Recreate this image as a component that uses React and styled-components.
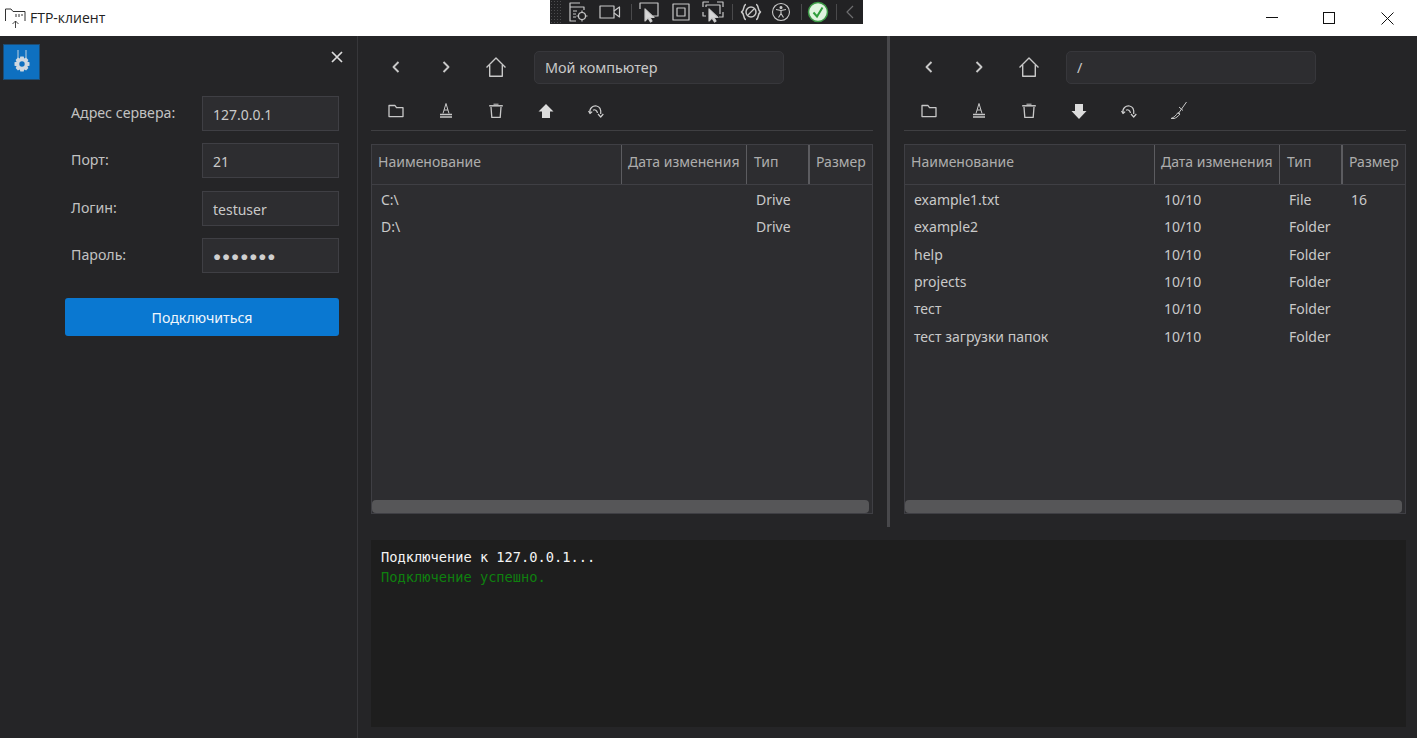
import React from 'react'
import styled, { createGlobalStyle } from 'styled-components'

const Global = createGlobalStyle`
  html, body { margin: 0; padding: 0; height: 100%; background: #252527; overflow: hidden; }
  * { box-sizing: border-box; }
`

const Window = styled.div`
  position: relative;
  width: 1417px;
  height: 738px;
  display: flex;
  flex-direction: column;
  font-family: 'Noto Sans', 'Open Sans', sans-serif;
  font-size: 14px;
  color: #c9c9c9;
`

const TitleBar = styled.header`
  height: 36px;
  flex: none;
  background: #fff;
  display: flex;
  align-items: center;
  padding-left: 4px;
  color: #222;
  font-family: 'Open Sans', sans-serif;
  font-size: 14px;
`

const TitleText = styled.span`
  margin-left: 4px;
  margin-top: -1px;
`

const WinButtons = styled.div`
  margin-left: auto;
  display: flex;
  align-items: center;
  margin-right: 23px;
  gap: 45px;
  svg { display: block; }
  svg:last-child { margin-left: 1px; }
`

const DevBar = styled.div`
  position: absolute;
  left: 550px;
  top: 0;
  width: 313px;
  height: 24px;
  background: #222224;
  display: flex;
  align-items: center;
`

const Gripper = styled.span`
  width: 16px;
  height: 24px;
  flex: none;
  background-image: radial-gradient(#4c4c4e 0.7px, transparent 0.8px);
  background-size: 3px 3px;
  background-position: 3px 0;
  background-clip: content-box;
  padding-right: 5px;
`

const DevSlot = styled.span`
  width: ${p => p.$w}px;
  height: 24px;
  flex: none;
  display: flex;
  align-items: center;
  justify-content: center;
`

const DevSep = styled.span`
  width: 1px;
  height: 16px;
  background: #4a4a4c;
  flex: none;
  margin-left: ${p => p.$ml || 0}px;
`

const Body = styled.div`
  flex: 1;
  display: flex;
  min-height: 0;
`

const Sidebar = styled.aside`
  position: relative;
  width: 358px;
  flex: none;
  border-right: 1px solid #37373a;
  padding: 8px 18px 0 3px;
`

const GearButton = styled.button`
  width: 37px;
  height: 36px;
  padding: 0;
  background: #0e70c0;
  border: 1px solid #1c4c74;
  display: flex;
  align-items: center;
  justify-content: center;
`

const CloseButton = styled.button`
  position: absolute;
  top: 14px;
  right: 13px;
  width: 14px;
  height: 14px;
  padding: 0;
  background: none;
  border: 0;
  display: flex;
  svg { display: block; }
`

const Form = styled.div`
  margin-top: 16px;
  margin-left: 62px;
  display: flex;
  flex-direction: column;
`

const FormRow = styled.label`
  display: flex;
  align-items: center;
  height: 35px;
  margin-bottom: 12.3px;
  padding-left: 6px;
`

const FormLabel = styled.span`
  width: 131px;
  flex: none;
  margin-top: -2px;
  font-size: 14.2px;
  color: #c2c2c2;
`

const Field = styled.div`
  width: 137px;
  height: 35px;
  background: #2d2d30;
  border: 1px solid #3f3f44;
  padding-left: 10px;
  line-height: 35px;
  color: ${p => (p.$dots ? '#cfcfcf' : '#c9c9c9')};
  letter-spacing: ${p => (p.$dots ? '0.9px' : '0')};
  font-size: ${p => (p.$dots ? '13.5px' : '14px')};
`

const ConnectButton = styled.button`
  margin-top: 13px;
  width: 274px;
  height: 38px;
  background: #0a78d1;
  border: 0;
  border-radius: 3px;
  color: #f0f6fc;
  font-family: inherit;
  font-size: 14.2px;
`

const Main = styled.main`
  flex: 1;
  min-width: 0;
  display: flex;
  flex-direction: column;
`

const Panes = styled.div`
  height: 491px;
  flex: none;
  display: flex;
`

const Pane = styled.section`
  width: ${p => p.$w}px;
  flex: none;
  padding: 15px ${p => p.$right}px 0 ${p => p.$left}px;
  display: flex;
  flex-direction: column;
`

const Splitter = styled.div`
  width: 3px;
  flex: none;
  background: #48484b;
`

const NavRow = styled.div`
  display: flex;
  align-items: center;
  height: 32px;
`

const NavSlot = styled.span`
  width: 50px;
  height: 32px;
  flex: none;
  display: flex;
  align-items: center;
  justify-content: center;
  svg { display: block; }
`

const NavSpacer = styled.span`
  width: ${p => (p.$remote ? 12 : 13)}px;
  flex: none;
`

const PathBox = styled.div`
  width: 250px;
  height: 33px;
  border-radius: 5px;
  background: #2d2d30;
  border: 1px solid #37373b;
  padding-left: 10px;
  line-height: 32px;
  font-size: 14.4px;
  color: #c9c9c9;
`

const ToolRow = styled.div`
  margin-top: 16px;
  height: 32px;
  display: flex;
  align-items: center;
  border-bottom: 1px solid #3f3f42;
  padding-bottom: 7px;
`

const ToolSlot = styled(NavSlot)`
  height: 24px;
`

const Table = styled.div`
  margin-top: 13px;
  height: 370px;
  background: #2d2d30;
  border: 1px solid #3f3f44;
  position: relative;
`

const HeaderRow = styled.div`
  height: 40px;
  display: grid;
  grid-template-columns: 249px 125px 62px 1fr;
  border-bottom: 1px solid #3f3f44;
`

const HeaderCell = styled.div`
  padding-left: ${p => p.$pad || 6}px;
  line-height: 34px;
  white-space: nowrap;
  overflow: hidden;
  color: #adadad;
  border-left: ${p => (p.$first ? '0' : `${p.$thick ? 2 : 1}px solid #5c5c60`)};
`

const Rows = styled.div`
  padding-top: 1px;
`

const Row = styled.div`
  height: 27.3px;
  display: grid;
  grid-template-columns: 249px 125px 62px 1fr;
  align-items: center;
`

const Cell = styled.div`
  padding-left: ${p => (p.$first ? 9 : 10)}px;
  white-space: nowrap;
  color: #c9c9c9;
`

const ScrollThumb = styled.div`
  position: absolute;
  left: 0;
  right: 3px;
  bottom: 0;
  height: 13px;
  border-radius: 4px;
  background: #565658;
`

const Log = styled.div`
  margin: 13px 11px 0 13px;
  height: 187px;
  background: #1e1e1e;
  padding: 7px 10px;
  font-family: 'DejaVu Sans Mono', monospace;
  font-size: 13.7px;
  line-height: 20px;
`

const LogLine = styled.div`
  color: ${p => (p.$ok ? '#0f800f' : '#f4f4f4')};
  font-weight: ${p => (p.$ok ? 400 : 500)};
`

const Ico = ({ w = 16, h = 16, sw = 1.3, color = '#c8c8c8', children }) => (
  <svg width={w} height={h} viewBox={`0 0 ${w} ${h}`} fill="none" stroke={color} strokeWidth={sw} strokeLinejoin="round">
    {children}
  </svg>
)

const Back = () => <Ico w={10} h={14} sw={1.9}><path d="M7.5 2 L2.5 7 L7.5 12" /></Ico>
const Forward = () => <Ico w={10} h={14} sw={1.9}><path d="M2.5 2 L7.5 7 L2.5 12" /></Ico>
const Home = () => (
  <Ico w={22} h={22} sw={1.4}>
    <path d="M1.5 11.5 L11 2 L20.5 11.5 M4.7 9 V20.3 H17.3 V9" />
  </Ico>
)
const FolderIco = () => (
  <Ico w={16} h={14}>
    <path d="M1 1.5 H7 L8.5 3.7 H15 V12.6 H1 Z" />
  </Ico>
)
const RenameIco = () => (
  <Ico w={14} h={18} sw={1}>
    <path d="M4 11.5 L7 1.5 L10 11.5 M5 8 H9" />
    <path d="M1 12.5 H13 M1 15 H13" strokeWidth="1.3" />
  </Ico>
)
const TrashIco = () => (
  <Ico w={16} h={16}>
    <path d="M5.5 1.2 H10.5" strokeWidth="1" />
    <path d="M1.2 2.8 H14.8" strokeWidth="1.5" />
    <path d="M3 4 L3.8 14.4 H12.2 L13 4" />
  </Ico>
)
const UploadIco = () => (
  <svg width="16" height="16" viewBox="0 0 16 16" fill="#dcdcdc"><path d="M8 1 L15.5 8.5 H12 V15 H4 V8.5 H0.5 Z" /></svg>
)
const DownloadIco = () => (
  <svg width="16" height="17" viewBox="0 0 16 17" fill="#dcdcdc"><path d="M4 1 H12 V8 H15.5 L8 16 L0.5 8 H4 Z" /></svg>
)
const RefreshIco = () => (
  <Ico w={16} h={15} sw={1.2} color="#d0d0d0">
    <path d="M2 9 C1 4 5 1.5 8.5 2 C11.5 2.5 13.2 5 12.7 10" />
    <path d="M0.5 7 L2 9.5 L4.2 7.6 M10 10 L12.7 13 L15.3 10" />
    <path d="M5 6.2 C7 5 9 6.5 9.5 9" />
  </Ico>
)
const SyncIco = () => (
  <Ico w={18} h={20} sw={1}>
    <path d="M16.5 1 L8 13 M9 6 L13 9.5" />
    <path d="M1 17.5 C4 16.5 6 14.5 8 11.5 L10 13 C8 15.5 6 17 4 17.5 Z" />
  </Ico>
)

const Gear = () => (
  <svg width="20" height="26" viewBox="0 0 20 26" fill="#cfd8e0">
    <path d="M6 1 V9 M14 1 V9" stroke="#bcd0e0" strokeWidth="1" />
    <path fillRule="evenodd" d="M8.3 7.5 H11.7 L12.2 9.6 L14.1 8.6 L16.4 10.9 L15.4 12.8 L17.5 13.3 V16.7 L15.4 17.2 L16.4 19.1 L14.1 21.4 L12.2 20.4 L11.7 22.5 H8.3 L7.8 20.4 L5.9 21.4 L3.6 19.1 L4.6 17.2 L2.5 16.7 V13.3 L4.6 12.8 L3.6 10.9 L5.9 8.6 L7.8 9.6 Z M10 12.3 A2.7 2.7 0 1 0 10 17.7 A2.7 2.7 0 1 0 10 12.3 Z" />
  </svg>
)

const AppIcon = () => (
  <svg width="22" height="24" viewBox="0 0 22 24" fill="none" stroke="#333" strokeWidth="1">
    <path d="M1.5 15 V3 H7 L9 5.5 H21 V15" />
    <path d="M11.5 22 V15 M8.5 18 L11.5 15 L14.5 18" strokeWidth="0.9" />
    <path d="M12 8 V11 M15 8 V11 M18 8 V10" strokeWidth="1" />
  </svg>
)

const DevIcons = {
  track: (
    <Ico w={22} h={22} sw={1.2}>
      <path d="M13 2 H3 V20 H9 M3 6 H17 V9 M6 10 H10 M6 13 H9 M6 16 H9" />
      <circle cx="15" cy="15" r="3.5" /><path d="M15 9.5 V11.5 M15 18.5 V20.5 M9.5 15 H11.5 M18.5 15 H20.5" />
    </Ico>
  ),
  video: (
    <Ico w={22} h={16} sw={1.2}>
      <rect x="1" y="2" width="14" height="12" /><path d="M15 7 L20.5 3 V13 L15 9" />
    </Ico>
  ),
  select: (
    <Ico w={22} h={22} sw={1.2}>
      <path d="M2 8 V2 H20 V15 H15" />
      <path d="M7 8 V20 L10 17 L12.5 21 L14 20 L12 16.5 H16 Z" fill="#d8d8d8" />
    </Ico>
  ),
  frame: (
    <Ico w={20} h={20} sw={1.2}>
      <rect x="2" y="2" width="16" height="16" /><rect x="6" y="6" width="8" height="8" />
    </Ico>
  ),
  corners: (
    <Ico w={22} h={22} sw={1.2}>
      <path d="M1 6 V1 H7 M15 1 H21 V6 M21 11 V16 H17 M1 11 V15 H4 M4 6 V4 H18 V13" />
      <path d="M7 8 V20 L10 17 L12.5 21 L14 20 L12 16.5 H16 Z" fill="#d8d8d8" />
    </Ico>
  ),
  binding: (
    <Ico w={22} h={20} sw={1.2}>
      <path d="M6 2.5 C3 2.5 5 8 1.5 10 C5 12 3 17.5 6 17.5 M16 2.5 C19 2.5 17 8 20.5 10 C17 12 19 17.5 16 17.5" strokeWidth="1.5" />
      <circle cx="11" cy="10" r="5" strokeWidth="1.5" /><path d="M8 13 L14 7" />
    </Ico>
  ),
  access: (
    <Ico w={20} h={20} sw={1.1}>
      <circle cx="10" cy="10" r="8.5" />
      <circle cx="10" cy="5.5" r="1" fill="#d8d8d8" />
      <path d="M5 7.5 L10 8.5 L15 7.5 M10 8.5 V11.5 L7.5 15.5 M10 11.5 L12.5 15.5" />
    </Ico>
  ),
  check: (
    <svg width="22" height="22" viewBox="0 0 22 22" fill="#dff3df" stroke="#3c9a46" strokeWidth="1.5">
      <circle cx="11" cy="11" r="9.5" />
      <path d="M6.5 11.5 L10 15.5 L15.5 6.5" fill="none" strokeWidth="2" stroke="#2f9e3c" />
    </svg>
  ),
  collapse: <Ico w={10} h={16} sw={1.2} color="#6d6d6f"><path d="M8 2 L2 8 L8 14" /></Ico>
}

const Toolbar = ({ remote }) => (
  <ToolRow>
    <ToolSlot><FolderIco /></ToolSlot>
    <ToolSlot><RenameIco /></ToolSlot>
    <ToolSlot><TrashIco /></ToolSlot>
    <ToolSlot>{remote ? <DownloadIco /> : <UploadIco />}</ToolSlot>
    <ToolSlot><RefreshIco /></ToolSlot>
    {remote && <ToolSlot><SyncIco /></ToolSlot>}
  </ToolRow>
)

const FilePane = ({ path, rows, remote, w, left, right }) => (
  <Pane $w={w} $left={left} $right={right}>
    <NavRow>
      <NavSlot><Back /></NavSlot>
      <NavSlot><Forward /></NavSlot>
      <NavSlot><Home /></NavSlot>
      <NavSpacer $remote={remote} />
      <PathBox>{path}</PathBox>
    </NavRow>
    <Toolbar remote={remote} />
    <Table>
      <HeaderRow>
        <HeaderCell $first>Наименование</HeaderCell>
        <HeaderCell>Дата изменения</HeaderCell>
        <HeaderCell $pad={7}>Тип</HeaderCell>
        <HeaderCell $thick>Размер</HeaderCell>
      </HeaderRow>
      <Rows>
        {rows.map(r => (
          <Row key={r[0]}>
            <Cell $first>{r[0]}</Cell>
            <Cell>{r[1]}</Cell>
            <Cell>{r[2]}</Cell>
            <Cell>{r[3]}</Cell>
          </Row>
        ))}
      </Rows>
      <ScrollThumb />
    </Table>
  </Pane>
)

const localRows = [
  ['C:\\', '', 'Drive', ''],
  ['D:\\', '', 'Drive', '']
]

const remoteRows = [
  ['example1.txt', '10/10', 'File', '16'],
  ['example2', '10/10', 'Folder', ''],
  ['help', '10/10', 'Folder', ''],
  ['projects', '10/10', 'Folder', ''],
  ['тест', '10/10', 'Folder', ''],
  ['тест загрузки папок', '10/10', 'Folder', '']
]

const fields = [
  ['Адрес сервера:', '127.0.0.1'],
  ['Порт:', '21'],
  ['Логин:', 'testuser'],
  ['Пароль:', '●●●●●●●', true]
]

export default function App() {
  return (
    <Window>
      <Global />
      <TitleBar>
        <AppIcon />
        <TitleText>FTP-клиент</TitleText>
        <WinButtons>
          <svg width="12" height="12" viewBox="0 0 12 12" stroke="#111" fill="none"><path d="M0 5.5 H12" /></svg>
          <svg width="12" height="12" viewBox="0 0 12 12" stroke="#111" fill="none"><rect x="0.5" y="0.5" width="11" height="11" /></svg>
          <svg width="13" height="13" viewBox="0 0 13 13" stroke="#111" fill="none"><path d="M0.5 0.5 L12.5 12.5 M12.5 0.5 L0.5 12.5" /></svg>
        </WinButtons>
      </TitleBar>
      <DevBar>
        <Gripper />
        <DevSlot $w={24}>{DevIcons.track}</DevSlot>
        <DevSlot $w={40}>{DevIcons.video}</DevSlot>
        <DevSep $ml={1} />
        <DevSlot $w={34}>{DevIcons.select}</DevSlot>
        <DevSlot $w={30}>{DevIcons.frame}</DevSlot>
        <DevSlot $w={34}>{DevIcons.corners}</DevSlot>
        <DevSep $ml={2} />
        <DevSlot $w={36}>{DevIcons.binding}</DevSlot>
        <DevSlot $w={24}>{DevIcons.access}</DevSlot>
        <DevSep $ml={8} />
        <DevSlot $w={32}>{DevIcons.check}</DevSlot>
        <DevSep $ml={2} />
        <DevSlot $w={26}>{DevIcons.collapse}</DevSlot>
      </DevBar>
      <Body>
        <Sidebar>
          <GearButton aria-label="Настройки"><Gear /></GearButton>
          <CloseButton aria-label="Закрыть">
            <svg width="14" height="14" viewBox="0 0 14 14" stroke="#dcdcdc" strokeWidth="1.7" fill="none">
              <path d="M2 2 L12 12 M12 2 L2 12" />
            </svg>
          </CloseButton>
          <Form>
            {fields.map(f => (
              <FormRow key={f[0]}>
                <FormLabel>{f[0]}</FormLabel>
                <Field $dots={f[2]}>{f[1]}</Field>
              </FormRow>
            ))}
            <ConnectButton>Подключиться</ConnectButton>
          </Form>
        </Sidebar>
        <Main>
          <Panes>
            <FilePane path="Мой компьютер" rows={localRows} w={529} left={13} right={14} />
            <Splitter />
            <FilePane path="/" rows={remoteRows} remote w={527} left={14} right={11} />
          </Panes>
          <Log>
            <LogLine>Подключение к 127.0.0.1...</LogLine>
            <LogLine $ok>Подключение успешно.</LogLine>
          </Log>
        </Main>
      </Body>
    </Window>
  )
}
